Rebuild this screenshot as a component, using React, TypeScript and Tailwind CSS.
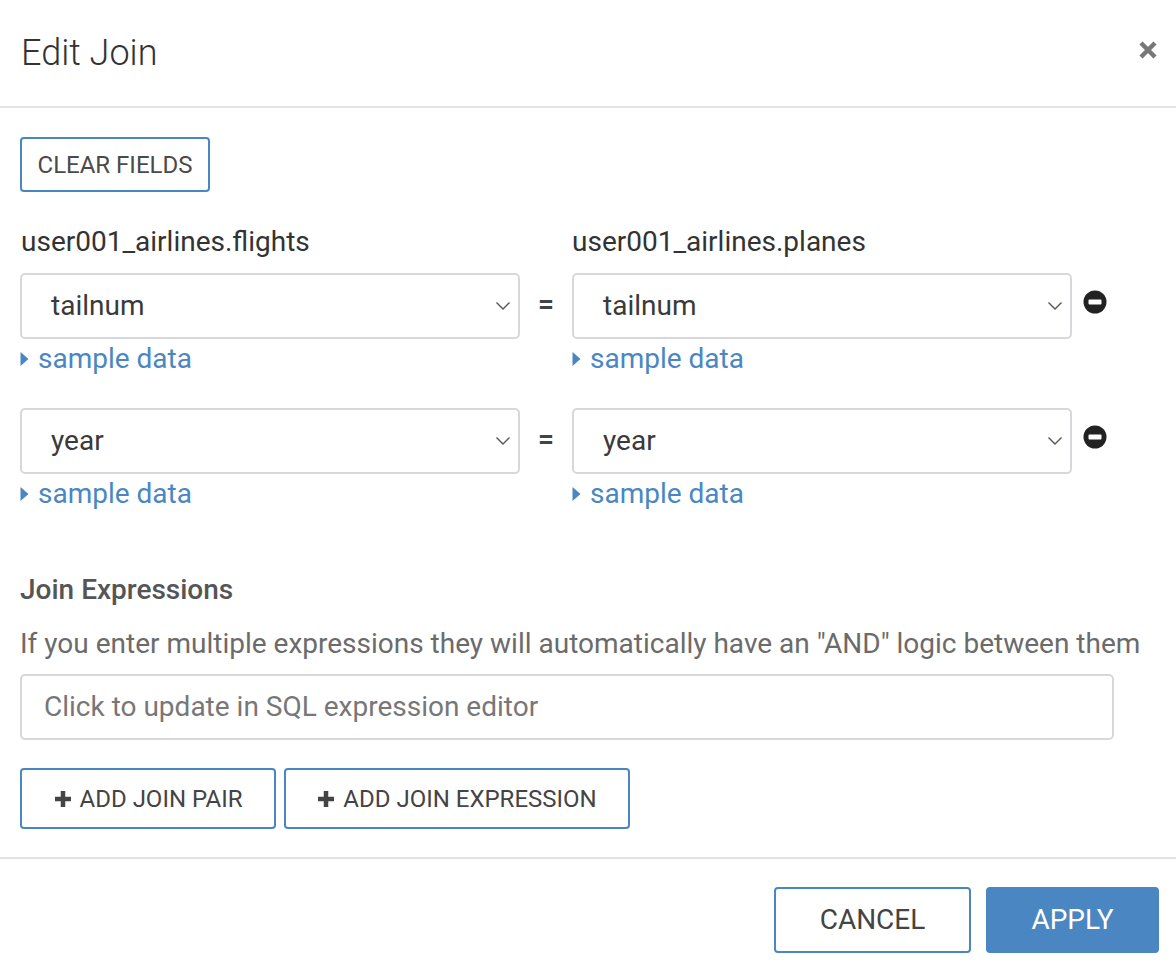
import React from 'react'

const font = { fontFamily: 'Roboto, "Liberation Sans", sans-serif' }

function Chevron() {
  return (
    <svg width="16" height="10" viewBox="0 0 16 10" className="shrink-0">
      <path d="M1.5 1.5 L8 8 L14.5 1.5" fill="none" stroke="#555" strokeWidth="1.4" />
    </svg>
  )
}

function MinusCircle() {
  return (
    <svg width="24" height="24" viewBox="0 0 24 24" className="shrink-0">
      <circle cx="12" cy="12" r="11.5" fill="#222" />
      <rect x="5.5" y="9.5" width="13" height="5" rx="1" fill="#fff" />
    </svg>
  )
}

function Caret() {
  return (
    <svg width="9" height="16" viewBox="0 0 9 16" className="shrink-0">
      <path d="M0.5 1 L8.5 8 L0.5 15 Z" fill="#4a87c2" />
    </svg>
  )
}

function Plus() {
  return (
    <svg width="18" height="18" viewBox="0 0 18 18" className="shrink-0">
      <path d="M9 1 V17 M1 9 H17" stroke="#444" strokeWidth="4.5" />
    </svg>
  )
}

function Select({ value }: { value: string }) {
  return (
    <div className="flex h-[66px] w-[500px] items-center justify-between rounded-[5px] border-2 border-[#d6d8db] bg-white pl-[29px] pr-[7px] text-[28px] leading-[32px] text-[#3a3a3a]">
      <span>{value}</span>
      <Chevron />
    </div>
  )
}

function SampleData() {
  return (
    <div className="mt-[6px] flex h-[28px] items-center gap-[9px] text-[28px] leading-[28px] text-[#4a87c2]">
      <Caret />
      <span>sample data</span>
    </div>
  )
}

function PairRow({ left, right }: { left: string; right: string }) {
  return (
    <div className="flex items-start">
      <div className="flex flex-col">
        <Select value={left} />
        <SampleData />
      </div>
      <div className="flex h-[62px] w-[52px] items-center justify-center text-[28px] font-bold text-[#444]">=</div>
      <div className="flex flex-col">
        <Select value={right} />
        <SampleData />
      </div>
      <div className="ml-[11px] flex h-[58px] items-center">
        <MinusCircle />
      </div>
    </div>
  )
}

export default function App() {
  return (
    <div className="min-h-[974px] w-[1176px] bg-white" style={font}>
      <div className="flex h-[108px] items-center justify-between border-b-2 border-[#e1e3e6] pl-[21px] pr-[18px]">
        <h1 className="text-[36px] font-light leading-[40px] text-[#333]">Edit Join</h1>
        <svg width="20" height="20" viewBox="0 0 20 20" className="mb-[6px]">
          <path d="M3 3 L17 17 M17 3 L3 17" stroke="#777" strokeWidth="4.5" />
        </svg>
      </div>

      <div className="px-5 pt-[29px]">
        <button className="h-[55px] w-[190px] rounded-[4px] border-2 border-[#4a87c2] text-[24px] leading-[28px] text-[#4a4a4a]">
          CLEAR FIELDS
        </button>

        <div className="mt-[36px] flex h-[28px] items-center text-[28px] leading-[28px] text-[#333]">
          <span className="w-[552px] pl-px">user001_airlines.flights</span>
          <span>user001_airlines.planes</span>
        </div>

        <div className="mt-[17px] flex flex-col gap-[35px]">
          <PairRow left="tailnum" right="tailnum" />
          <PairRow left="year" right="year" />
        </div>

        <div className="mt-[68px] h-[28px] text-[28px] font-medium leading-[28px] text-[#555]">Join Expressions</div>
        <div className="mt-[26px] h-[28px] whitespace-nowrap text-[28px] leading-[28px] text-[#6b6b6b]">
          If you enter multiple expressions they will automatically have an "AND" logic between them
        </div>

        <div className="mt-[16px] flex h-[66px] w-[1094px] items-center rounded-[5px] border-2 border-[#d6d8db] pl-[22px] text-[28px] leading-[32px] text-[#777]">
          Click to update in SQL expression editor
        </div>

        <div className="mt-[28px] flex gap-[8px] pb-[28px]">
          <button className="flex h-[61px] w-[256px] items-center justify-center gap-[8px] rounded-[4px] border-2 border-[#4a87c2] text-[24px] leading-[28px] text-[#444]">
            <Plus />
            ADD JOIN PAIR
          </button>
          <button className="flex h-[61px] w-[346px] items-center justify-center gap-[8px] rounded-[4px] border-2 border-[#4a87c2] text-[24px] leading-[28px] text-[#444]">
            <Plus />
            ADD JOIN EXPRESSION
          </button>
        </div>
      </div>

      <div className="flex justify-end gap-[15px] border-t-2 border-[#e1e3e6] pr-[17px] pt-[28px]">
        <button className="h-[66px] w-[197px] rounded-[4px] border-2 border-[#4a87c2] bg-white text-[28px] leading-[32px] text-[#444]">
          CANCEL
        </button>
        <button className="h-[66px] w-[173px] rounded-[4px] bg-[#4a87c2] text-[28px] leading-[32px] text-white">
          APPLY
        </button>
      </div>
    </div>
  )
}
